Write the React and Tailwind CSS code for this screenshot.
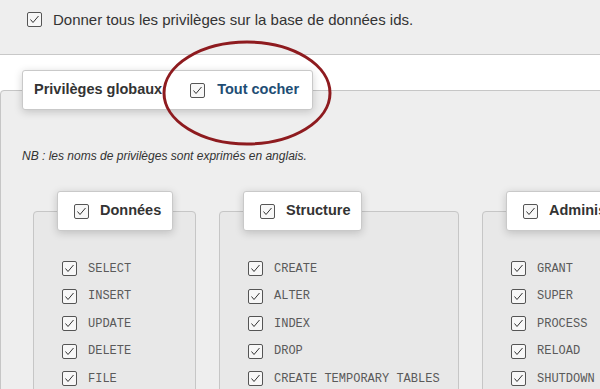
import React from "react";

function Box({ className = "" }) {
  return (
    <svg width="15" height="15" viewBox="0 0 15 15" className={"shrink-0 " + className}>
      <rect x="0.5" y="0.5" width="14" height="14" rx="1.5" fill="#f7f7f7" stroke="#555" />
      <polyline points="3.5,7.5 6,10.5 11.5,4" fill="none" stroke="#333" strokeWidth="1" />
    </svg>
  );
}

const groups = [
  { title: "Données", w: "w-[163px]", legendPad: "pl-[16px] pr-[11px]", items: ["SELECT", "INSERT", "UPDATE", "DELETE", "FILE"] },
  { title: "Structure", w: "w-[240px]", legendPad: "pl-[16px] pr-[11px]", items: ["CREATE", "ALTER", "INDEX", "DROP", "CREATE TEMPORARY TABLES"] },
  { title: "Administration", w: "w-[240px]", legendPad: "pl-[16px] pr-[11px]", items: ["GRANT", "SUPER", "PROCESS", "RELOAD", "SHUTDOWN"] },
];

export default function App() {
  return (
    <div className="relative w-[600px] h-[389px] overflow-hidden bg-white font-['Liberation_Sans',Arial,sans-serif] text-[#333]">
      <div className="h-[55px] bg-[#eeeeee] border-b border-[#c8c8c8] pt-[12px] pl-[27px]">
        <label className="flex items-center gap-[11px] text-[15px] leading-[15px]">
          <Box />
          <span>Donner tous les privilèges sur la base de données ids.</span>
        </label>
      </div>

      <div className="pt-[15px]">
        <fieldset className="w-[640px] border border-[#c6c6c6] rounded-[4px] bg-[#eeeeee] px-[21px]">
          <legend className="flex items-center h-[40px] bg-white border border-[#c9c9c9] rounded-[3px] shadow-[0_2px_8px_rgba(0,0,0,0.18)] pl-[11px] pr-[13px]">
            <span className="text-[14.5px] font-bold">Privilèges globaux</span>
            <Box className="ml-[28px]" />
            <span className="ml-[12px] text-[14.5px] font-bold text-[#214d74]">Tout cocher</span>
          </legend>

          <p className="mt-[39px] text-[12px] italic leading-[14px]">
            NB : les noms de privilèges sont exprimés en anglais.
          </p>

          <div className="flex gap-[23px] ml-[11px] mt-[28px]">
            {groups.map((g) => (
              <fieldset
                key={g.title}
                className={"shrink-0 border border-[#c6c6c6] rounded-[4px] bg-[#e8e8e8] pl-[23px] pb-[20px] " + g.w}
              >
                <legend className={"flex items-center h-[40px] bg-white border border-[#c9c9c9] rounded-[3px] shadow-[0_2px_8px_rgba(0,0,0,0.18)] " + g.legendPad}>
                  <Box />
                  <span className="ml-[11px] text-[14.5px] font-bold whitespace-nowrap">{g.title}</span>
                </legend>
                <ul className="ml-[5px] mt-[30px] flex flex-col gap-[12.5px]">
                  {g.items.map((it) => (
                    <li key={it} className="flex items-center h-[15px]">
                      <Box />
                      <span className="ml-[11px] font-['Courier_New','Liberation_Mono',monospace] text-[12px] text-[#5a5a5a] whitespace-nowrap">
                        {it}
                      </span>
                    </li>
                  ))}
                </ul>
              </fieldset>
            ))}
          </div>
        </fieldset>
      </div>

      <svg className="absolute left-[161px] top-[39px] pointer-events-none" width="172" height="108" viewBox="0 0 172 108">
        <ellipse cx="86" cy="54" rx="83" ry="51" fill="none" stroke="#8e1b1f" strokeWidth="3" />
      </svg>
    </div>
  );
}
